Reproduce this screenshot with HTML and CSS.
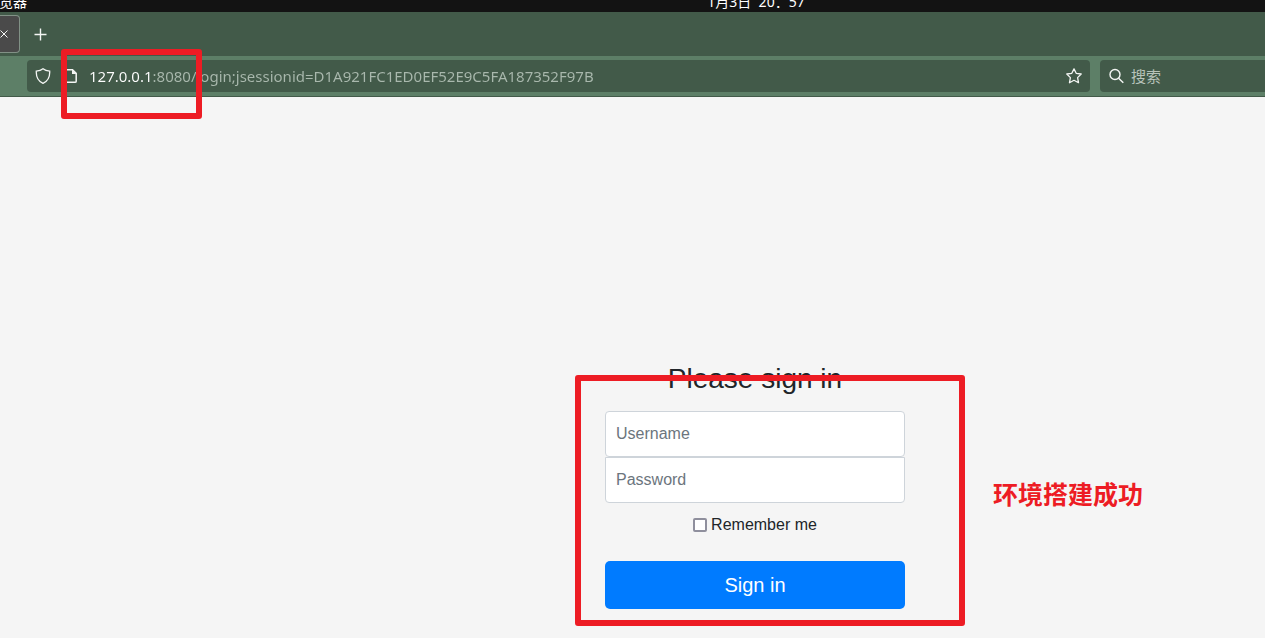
FILE: index.html
```
<!DOCTYPE html>
<html lang="zh-CN">
<head>
    <meta charset="UTF-8">
    <title>Please sign in</title>
    <meta name="viewport" content="width=device-width, initial-scale=1.0">
    <link rel="stylesheet" href="styles.css">
</head>
<body>
    <div class="topbar">
        <span class="app-name">览器</span>
        <span class="clock">1月3日&nbsp; 20：57</span>
    </div>

    <div class="browser">
        <div class="tabs">
            <div class="tab">
                <button class="icon-btn" aria-label="关闭标签页">
                    <svg width="8" height="8" viewBox="0 0 8 8"><path d="M0.5 0.5L7.5 7.5M7.5 0.5L0.5 7.5"/></svg>
                </button>
            </div>
            <button class="icon-btn new-tab" aria-label="新建标签页">
                <svg width="13" height="13" viewBox="0 0 13 13"><path d="M6.5 0.5V12.5M0.5 6.5H12.5" stroke-width="1.4"/></svg>
            </button>
        </div>

        <div class="toolbar">
            <div class="field url-field">
                <svg width="16" height="16" viewBox="0 0 16 16"><path d="M8 0.8C6.2 2.3 3.8 3 1.3 3.2C1 9 2.4 13 8 15.3C13.6 13 15 9 14.7 3.2C12.2 3 9.8 2.3 8 0.8Z" stroke-width="1.3"/></svg>
                <svg class="page-icon" width="12" height="16" viewBox="0 0 12 16"><path d="M1 1.7H7.5L11.2 5.4V13.2Q11.2 14.3 10 14.3H1" stroke-width="1.5"/><path class="solid" d="M7 1.5V6H11.5Z"/></svg>
                <input class="url" type="text" aria-label="网址" value="127.0.0.1:8080/login;jsessionid=D1A921FC1ED0EF52E9C5FA187352F97B">
                <button class="icon-btn" aria-label="添加书签">
                    <svg width="16" height="16" viewBox="0 0 16 16"><path d="M8 0.9L10.2 5.3L15.2 6L11.6 9.6L12.5 14.7L8 12.3L3.5 14.7L4.4 9.6L0.8 6L5.8 5.3Z" stroke-width="1.3" stroke-linejoin="round"/></svg>
                </button>
            </div>
            <div class="field search-field">
                <svg width="16" height="16" viewBox="0 0 16 16"><circle cx="7" cy="6.5" r="5" stroke-width="1.4"/><path d="M10.600 10.200L15.300 14.700" stroke-width="1.5"/></svg>
                <input class="search" type="text" placeholder="搜索" aria-label="搜索">
            </div>
        </div>
        <div class="mark mark-url"></div>
    </div>

    <main class="page">
        <form class="form-signin">
            <h2>Please sign in</h2>
            <input class="form-control" type="text" placeholder="Username" aria-label="Username">
            <input class="form-control" type="password" placeholder="Password" aria-label="Password">
            <label class="remember"><input type="checkbox"> Remember me</label>
            <button class="btn" type="submit">Sign in</button>
            <div class="mark mark-form"></div>
            <div class="note">环境搭建成功</div>
        </form>
    </main>
</body>
</html>
```

FILE: styles.css
```
* {
    box-sizing: border-box;
}

body {
    margin: 0;
    background: #f5f5f5;
    color: #212529;
    font-family: "Liberation Sans", "Noto Sans CJK SC", sans-serif;
    font-size: 16px;
    overflow: hidden;
}

/* system bar */
.topbar {
    display: grid;
    grid-template-columns: 1fr auto 1fr;
    align-content: end;
    height: 12px;
    padding-left: 247px;
    background: #131313;
    color: #fff;
    font: 14px/20px "Noto Sans", "Noto Sans CJK SC", sans-serif;
    overflow: hidden;
}

.app-name {
    margin-left: -248px;
}

/* browser */
.browser {
    position: relative;
    border-bottom: 1px solid #425a49;
}

svg {
    flex: none;
    display: block;
    fill: none;
    stroke: #f4f6f4;
}

.solid {
    fill: #f4f6f4;
    stroke: none;
}

.icon-btn {
    padding: 0;
    border: 0;
    background: none;
    cursor: pointer;
}

.tabs {
    display: flex;
    align-items: center;
    gap: 14px;
    height: 44px;
    background: #425a49;
}

.tab {
    display: flex;
    align-items: center;
    width: 20px;
    height: 38px;
    background: #4a4a4a;
    border: 1px solid #819186;
    border-left: 0;
    border-radius: 0 4px 4px 0;
}

.toolbar {
    display: flex;
    gap: 10px;
    padding: 4px 0 4px 27px;
    background: #5d7f67;
}

.field {
    display: flex;
    align-items: center;
    height: 32px;
    padding: 0 8px;
    background: #425a49;
    border-radius: 4px;
}

.field input {
    min-width: 0;
    padding: 0;
    border: 0;
    outline: 0;
    background: none;
    font-family: "Noto Sans", "Noto Sans CJK SC", sans-serif;
    font-size: 15px;
}

.url-field {
    flex: 1;
}

.page-icon {
    margin: 0 12px 0 14px;
}

.field .url {
    flex: 1;
    height: 24px;
    /* host in white, the rest dimmed */
    background: linear-gradient(90deg, #fff 63px, #a9b8ad 63px);
    -webkit-background-clip: text;
    background-clip: text;
    color: transparent;
}

.search-field {
    width: 165px;
    border-radius: 4px 0 0 4px;
}

.search {
    flex: 1;
    margin-left: 7px;
}

.search::placeholder {
    color: #b7c3ba;
}

/* login page */
.page {
    display: flex;
    justify-content: center;
    padding: 264px 0 29px 245px;
}

.form-signin {
    position: relative;
    display: flex;
    flex-direction: column;
    width: 300px;
}

h2 {
    margin: 0 0 14px;
    font-size: 28px;
    font-weight: 400;
    line-height: 36px;
    text-align: center;
}

.form-control {
    height: 46px;
    padding: 10px;
    border: 1px solid #ced4da;
    border-radius: 4px;
    background: #fff;
    font: inherit;
}

.form-control::placeholder {
    color: #6c757d;
}

.form-control[type="password"] {
    border-top-left-radius: 0;
    border-top-right-radius: 0;
}

.remember {
    display: flex;
    align-items: center;
    justify-content: center;
    gap: 4px;
    margin: 10px 0 24px;
    line-height: 24px;
}

.remember input {
    appearance: none;
    width: 14px;
    height: 14px;
    margin: 0;
    border: 2px solid #8f8f9d;
    border-radius: 2px;
    background: #fff;
}

.remember input:checked {
    background: #007bff;
}

.btn {
    height: 48px;
    border: 0;
    border-radius: 5px;
    background: #007bff;
    color: #fff;
    font: inherit;
    font-size: 20px;
    cursor: pointer;
}

/* red notes */
.mark {
    position: absolute;
    border: 6px solid #ed1c24;
    border-radius: 3px;
    pointer-events: none;
}

.mark-url {
    top: 37px;
    left: 61px;
    width: 141px;
    height: 70px;
}

.mark-form {
    top: 14px;
    right: -60px;
    bottom: -17px;
    left: -30px;
}

.note {
    position: absolute;
    top: 114px;
    left: 388px;
    color: #ed1c24;
    font: 700 25px/36px "Noto Sans CJK SC", sans-serif;
    white-space: nowrap;
}
```
